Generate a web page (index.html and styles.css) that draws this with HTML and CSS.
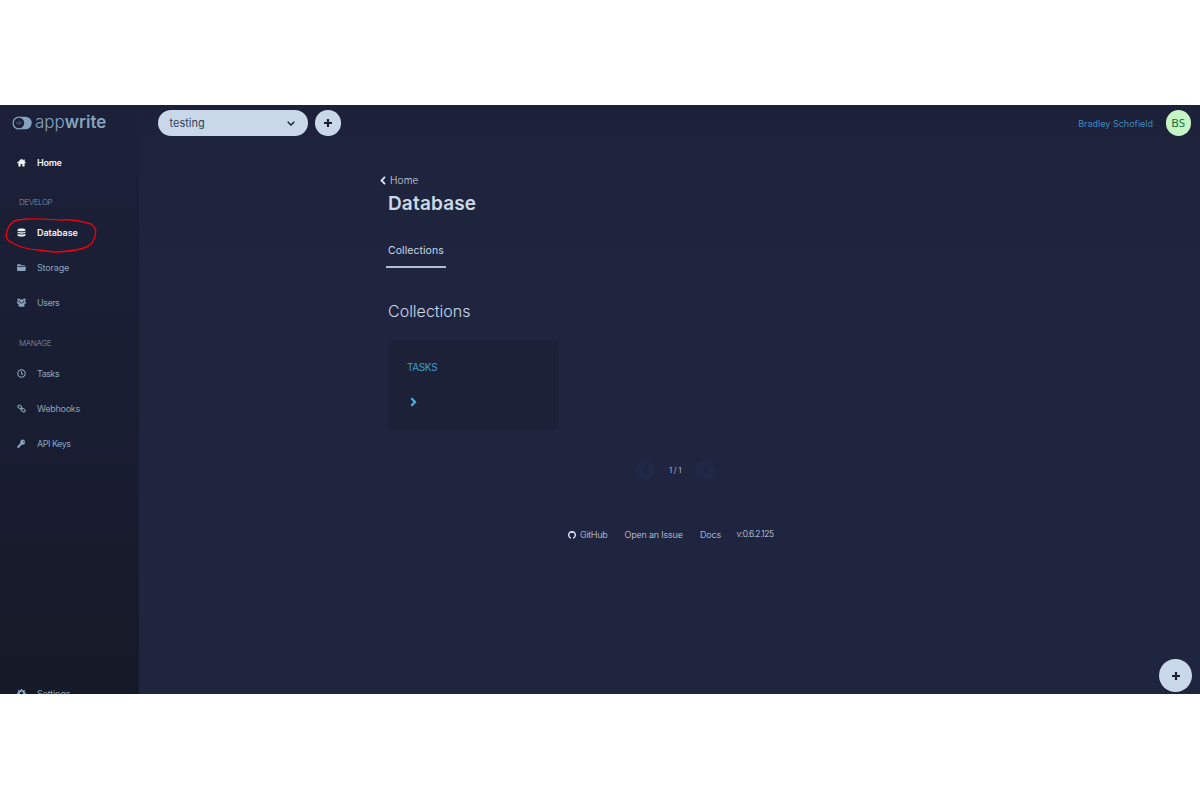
FILE: index.html
```html
<!DOCTYPE html>
<html lang="en">
<head>
<meta charset="utf-8">
<title>Database - Appwrite</title>
<link rel="stylesheet" href="styles.css">
</head>
<body>
<div class="app">
  <aside class="sidebar">
    <a class="brand">
      <svg class="brand-mark" viewBox="0 0 20 14"><path d="M9 .7h4.400a6.300 6.300 0 0 1 0 12.600H9z" fill="#85a3be"/><circle cx="7" cy="7" r="5.900" fill="#1c2039" stroke="#85a3be" stroke-width="1.300"/><path d="M5.800 5.700L4.600 7l1.200 1.300M8.200 5.700L9.400 7 8.200 8.300M7.300 5.200l-.6 3.600" fill="none" stroke="#85a3be" stroke-width=".5"/></svg>
      <span class="brand-app">app</span><span class="brand-write">write</span>
    </a>
    <nav class="nav">
      <a class="item strong"><svg class="icon" viewBox="0 0 16 16"><path d="M8 1.500L0 8.500l1 1.100 1.500-1.200V15h4v-4.500h3V15h4V8.400L15 9.600l1-1.100-2.200-1.900V2.500h-2.300v2.100z"/></svg><span class="t-home">Home</span></a>
      <div class="label"><span>DEVELOP</span></div>
      <a class="item strong"><svg class="icon" viewBox="0 0 16 16"><path d="M1 3c0-3 14-3 14 0v1c0 2.500-14 2.500-14 0zM1 6c2 2 12 2 14 0v2.200c0 2.500-14 2.500-14 0zM1 10.200c2 2 12 2 14 0V13c0 3-14 3-14 0z"/></svg><span class="t-database">Database</span></a>
      <a class="item"><svg class="icon" viewBox="0 0 16 16"><path d="M0 3.500Q0 2 1.500 2H6l1.500 2H13q1.500 0 1.500 1.500H0zM0 6.500h16L15 14H1.300Q0 14 0 12.500z"/></svg><span class="t-storage">Storage</span></a>
      <a class="item"><svg class="icon" viewBox="0 0 16 16"><circle cx="3" cy="3.300" r="2.300"/><circle cx="13" cy="3.300" r="2.300"/><circle cx="8" cy="5.300" r="3"/><path d="M0 6h4.200q.2 2 1.200 2.600L3.200 10H1.400Q0 10 0 8.500zM16 6h-4.200q-.2 2-1.200 2.600L12.800 10h1.800Q16 10 16 8.500zM5.200 9q2.800 1.600 5.600 0 2.700.8 2.700 4.500 0 2-2 2h-7q-2 0-2-2Q2.500 9.800 5.200 9z"/></svg><span class="t-users">Users</span></a>
      <div class="label"><span>MANAGE</span></div>
      <a class="item"><svg class="icon line" viewBox="0 0 16 16"><circle cx="8" cy="8" r="6.700"/><path d="M8 4v4.500l3 1"/></svg><span class="t-tasks">Tasks</span></a>
      <a class="item"><svg class="icon line" viewBox="0 0 16 16"><rect x="1.200" y="2.800" width="7.500" height="4.800" rx="2.300" transform="rotate(42 5 5.200)"/><rect x="7.200" y="8.600" width="7.500" height="4.800" rx="2.300" transform="rotate(42 11 11)"/><path d="M6.500 6.500l3 3"/></svg><span class="t-webhooks">Webhooks</span></a>
      <a class="item"><svg class="icon" viewBox="0 0 16 16"><path fill-rule="evenodd" d="M10.500 1a5 5 0 0 0-4.600 6.700L.5 13v2.500h4v-2h2v-2l2-1.500a4.800 4.800 0 0 0 2 .3A4.700 4.700 0 0 0 10.500 1zm1.700 2.400a1.200 1.200 0 1 1 0 2.400 1.200 1.200 0 0 1 0-2.400z"/></svg><span class="t-keys">API Keys</span></a>
    </nav>
    <a class="item settings"><svg class="icon" viewBox="0 0 16 16"><path fill-rule="evenodd" d="M6.800 0h2.400l.5 2 1.500.6L13 1.500 14.600 3l-1.200 1.900.6 1.500 2 .5v2.300l-2 .5-.6 1.500 1.200 1.900-1.700 1.600-1.800-1.100-1.500.6-.4 1.900H6.800l-.5-2-1.500-.6L3 14.500 1.400 13l1.200-1.900L2 9.600l-2-.5V6.800l2-.4.600-1.500L1.400 3 3 1.500l1.800 1.100L6.300 2zM8 5a3 3 0 1 0 0 6 3 3 0 0 0 0-6z"/></svg><span class="t-settings">Settings</span></a>
  </aside>

  <div class="page">
    <header class="topbar">
      <div class="select"><span class="t-testing">testing</span><svg class="caret" viewBox="0 0 8 5"><path d="M.7.700L4 4 7.300.700"/></svg></div>
      <button class="add"><svg class="plus" viewBox="0 0 8 8"><path d="M4 0v8M0 4h8"/></svg></button>
      <span class="user">Bradley Schofield</span>
      <span class="avatar">BS</span>
    </header>
    <main class="content">
      <a class="back"><svg class="back-icon" viewBox="0 0 6 9"><path d="M5 .9L1.500 4.500 5 8.100"/></svg><span class="t-back">Home</span></a>
      <h1 class="title">Database</h1>
      <div class="tabs"><a class="tab">Collections</a></div>
      <h2 class="subtitle">Collections</h2>
      <a class="card"><span class="card-name">TASKS</span><svg class="card-arrow" viewBox="0 0 7 10"><path d="M1.300 1.300L5 5 1.300 8.700"/></svg></a>
      <div class="pager">
        <span class="page-btn"><svg class="page-arrow" viewBox="0 0 5 8"><path d="M4 1L1 4l3 3"/></svg></span>
        <span class="page-no">1 / 1</span>
        <span class="page-btn"><svg class="page-arrow" viewBox="0 0 5 8"><path d="M1 1l3 3-3 3"/></svg></span>
      </div>
      <footer class="footer">
        <svg class="github" viewBox="0 0 16 16"><path d="M8 0a8 8 0 0 0-2.500 15.600c.4 0 .5-.2.500-.5v-2.800C3 12 2.800 9.800 2.800 8c0-1 .4-1.800 1-2.400-.2-.7-.2-1.500.1-2.300.8 0 1.600.4 2.300.9a8 8 0 0 1 3.600 0c.7-.5 1.500-.9 2.300-.9.3.8.3 1.600.1 2.300.6.6 1 1.400 1 2.400 0 1.800-.2 4-3.200 4.300v2.800c0 .3.100.5.500.5A8 8 0 0 0 8 0z"/></svg>
        <a class="link link-github">GitHub</a><a class="link link-issue">Open an Issue</a><a class="link link-docs">Docs</a><span class="link link-version">v:0.6.2.125</span>
      </footer>
    </main>
  </div>
  <button class="fab"><svg class="plus" viewBox="0 0 8 8"><path d="M4 0v8M0 4h8"/></svg></button>
  <svg class="marker" viewBox="0 0 94 38"><path d="M19 2.300C31 1 47 2.500 58 3c9-.9 20 1.300 29 4 4 3 5.500 6 4.500 10-1 6-3 10-8 12.500-8 4-17 4.500-29 5.500-8 .2-15-1.500-21-2-10-.5-18-3-26-7.500C2 23 1 20 3 14 6 5 11 2 21 2.500"/></svg>
</div>
</body>
</html>
```
FILE: styles.css
```css
* { box-sizing: border-box; }
body { margin: 0; padding-top: 105px; height: 800px; overflow: hidden; background: #fff; font-family: Inter, "Open Sans", sans-serif; font-size: 9px; color: #c9d9e9; }
h1, h2 { margin: 0; }
button { border: 0; padding: 0; }
.app { position: relative; display: flex; height: 589px; overflow: hidden; background: linear-gradient(#1c2039, #1f243d 12%, #20253f 30%, #20253f); }
.sidebar { display: flex; flex-direction: column; width: 139px; flex: none; background: linear-gradient(#1c2039, #1a1e33 45%, #161927); color: #87a5bf; }
.brand { display: flex; align-items: center; height: 35px; padding-left: 12px; font-size: 17px; line-height: 35px; color: #85a3be; }
.brand-mark { width: 20px; height: 14px; margin: 1px 3px 0 0; }
.brand-app { font-weight: 300; }
.brand-write { font-weight: 600; }
.nav { padding-top: 4.6px; }
.item { display: flex; align-items: center; gap: 11px; height: 35.2px; padding-left: 17px; white-space: nowrap; }
.icon { width: 9px; height: 9px; fill: currentColor; }
.icon.line { fill: none; stroke: currentColor; stroke-width: 1.8; }
.strong { color: #f0f4f8; font-weight: 600; }
.t-home { letter-spacing: -.25px; }
.t-database { letter-spacing: -.05px; }
.t-storage { letter-spacing: -.15px; }
.t-users, .t-tasks { letter-spacing: -.5px; }
.t-webhooks { letter-spacing: -.25px; }
.t-keys { letter-spacing: -.5px; }
.t-settings { letter-spacing: -.15px; }
.label { height: 35.2px; padding: 5px 0 0 19px; line-height: 35px; font-size: 8px; font-weight: 300; letter-spacing: -.4px; color: #7d92a9; }
.settings { flex: none; margin-top: auto; margin-bottom: -17px; }
.page { display: flex; flex: 1; flex-direction: column; }
.topbar { display: flex; align-items: center; height: 36px; padding: 0 9px 0 18.5px; }
.select { display: flex; align-items: center; justify-content: space-between; width: 150px; height: 25.5px; padding: 0 13px 0 12px; border-radius: 13px; background: #c8d8e9; color: #333f58; font-size: 11px; }
.caret { width: 8px; height: 5px; fill: none; stroke: #1c2039; stroke-width: 1.4; }
.add { display: flex; align-items: center; justify-content: center; width: 25.5px; height: 25.5px; margin-left: 7.5px; border-radius: 50%; background: #c8d8e9; }
.plus { width: 8px; height: 8px; stroke: #1c2039; stroke-width: 2.2; }
.user { margin-left: auto; color: #4189bb; }
.avatar { width: 25.5px; height: 25.5px; margin-left: 12.5px; border-radius: 50%; background: #c5f4c5; color: #176a38; font: 11.5px/26px "Noto Sans", "Open Sans", sans-serif; text-align: center; }
.content { display: flex; flex-direction: column; width: 573px; margin-left: 249px; padding-top: 31px; }
.back { display: flex; align-items: center; gap: 4px; height: 16px; margin-left: -8px; font-size: 10px; font-weight: 300; letter-spacing: .15px; }
.back-icon { width: 6px; height: 9px; fill: none; stroke: #dce8f4; stroke-width: 1.8; }
.title { margin-top: 4px; font-size: 19px; line-height: 24px; font-weight: 600; letter-spacing: .15px; }
.tabs { display: flex; height: 38px; margin: 14px 0 0 -2px; }
.tab { width: 60px; height: 38px; padding-left: 2px; border-bottom: 2px solid #aebfd7; font-size: 10.5px; line-height: 41px; letter-spacing: .05px; white-space: nowrap; }
.subtitle { margin-top: 31px; font-size: 16px; line-height: 24px; font-weight: 300; }
.card { display: flex; flex-direction: column; width: 171px; height: 90px; margin-top: 17px; padding: 18px 19px; border-radius: 6px; background: #1c2138; color: #409fcf; }
.card-name { height: 18px; line-height: 18px; font-size: 10px; letter-spacing: -.35px; }
.card-arrow { width: 7px; height: 10px; margin: 21px 0 0 3px; fill: none; stroke: #49b4e4; stroke-width: 2.2; }
.pager { display: flex; align-items: center; justify-content: space-between; width: 80px; height: 20px; margin: 30px 0 0 247px; }
.page-btn { display: flex; align-items: center; justify-content: center; width: 20px; height: 20px; border-radius: 50%; background: #202848; }
.page-arrow { width: 5px; height: 8px; fill: none; stroke: #1b2142; stroke-width: 1.5; }
.page-no { font-size: 8px; font-weight: 300; letter-spacing: -.3px; }
.footer { display: flex; align-items: center; height: 16px; margin: 46px 0 0 180px; font-weight: 300; white-space: nowrap; }
.github { width: 8px; height: 8px; margin: 1px 4px 0 0; fill: #d5e2ef; }
.link-github { width: 44.5px; letter-spacing: -.25px; }
.link-issue { width: 75.5px; letter-spacing: -.15px; }
.link-docs { width: 36.5px; letter-spacing: -.1px; }
.link-version { font-size: 8.5px; letter-spacing: -.45px; }
.fab { position: absolute; right: 8px; bottom: 2px; display: flex; align-items: center; justify-content: center; width: 33px; height: 33px; border-radius: 50%; background: #c8d8e9; }
.marker { position: absolute; left: 4px; top: 112px; width: 94px; height: 38px; fill: none; stroke: #f00008; stroke-width: 1.4; }
```
